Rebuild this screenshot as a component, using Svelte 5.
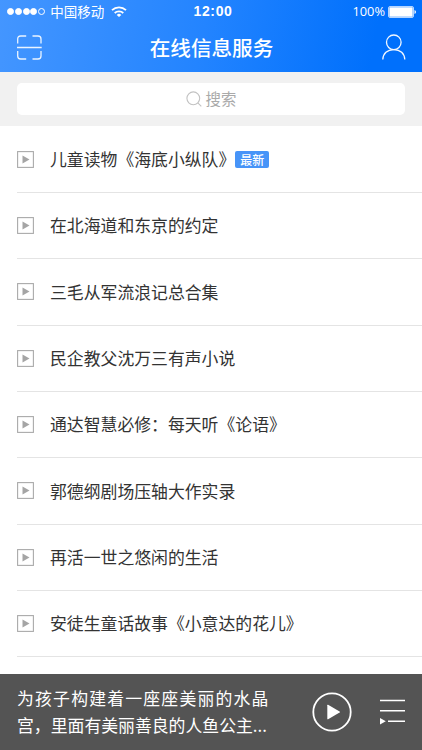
<script lang="ts">
  type Book = { id: number; title: string; fresh?: boolean };

  const books: Book[] = [
    { id: 1, title: '儿童读物《海底小纵队》', fresh: true },
    { id: 2, title: '在北海道和东京的约定' },
    { id: 3, title: '三毛从军流浪记总合集' },
    { id: 4, title: '民企教父沈万三有声小说' },
    { id: 5, title: '通达智慧必修：每天听《论语》' },
    { id: 6, title: '郭德纲剧场压轴大作实录' },
    { id: 7, title: '再活一世之悠闲的生活' },
    { id: 8, title: '安徒生童话故事《小意达的花儿》' },
  ];

  const signal = [true, true, true, true, false];
</script>

<div class="screen">
  <header>
    <div class="status">
      <div class="carrier">
        <span class="dots">
          {#each signal as on}<i class:on></i>{/each}
        </span>
        <span>中国移动</span>
        <svg class="wifi" width="16" height="12" viewBox="0 0 16 12" fill="none" stroke="#fff" stroke-width="1.8">
          <path d="M1 4.2a10.2 10.2 0 0 1 14 0" />
          <path d="M3.7 7a6.3 6.3 0 0 1 8.6 0" />
          <path d="M8 11 5.7 8.9a3.4 3.4 0 0 1 4.6 0z" fill="#fff" stroke="none" />
        </svg>
      </div>
      <time>12:00</time>
      <div class="power">
        <span>100%</span>
        <svg width="28" height="12" viewBox="0 0 28 12">
          <rect x=".5" y=".5" width="25" height="11" rx="1.5" fill="none" stroke="#b5d5ff" />
          <rect x="1.3" y="1.3" width="23.4" height="9.4" rx=".5" fill="#fff" />
          <path d="M26.5 4q1.5.5 1.5 2t-1.5 2z" fill="#fff" />
        </svg>
      </div>
    </div>
    <nav>
      <button aria-label="扫一扫">
        <svg width="26" height="26" viewBox="0 0 26 26" fill="none" stroke="#eaf4ff" stroke-width="1.3">
          <path d="M.7 9.500V5q0-3 3-3h5.500M15.500 2H21q3 0 3 3v4.500M.7 17v5q0 3 3 3h5.500M15.500 25H21q3 0 3-3v-5M0 13.500h24.700" />
        </svg>
      </button>
      <h1>在线信息服务</h1>
      <button aria-label="我的">
        <svg width="24" height="26" viewBox="0 0 24 26" fill="none" stroke="#f2f8ff" stroke-width="1.3">
          <circle cx="11.8" cy="8.3" r="7.3" />
          <path d="M.8 25.600C1 19.600 5.300 15.600 11.800 15.600s10.800 4 11 10" />
        </svg>
      </button>
    </nav>
  </header>

  <div class="search">
    <div class="field">
      <svg width="16" height="16" viewBox="0 0 16 16" fill="none" stroke="#c2c2c2" stroke-width="1.1">
        <circle cx="7.3" cy="7.3" r="6.4" />
        <path d="m11.8 11.8 3.5 3.5" />
      </svg>
      <span>搜索</span>
    </div>
  </div>

  <ul>
    {#each books as book (book.id)}
      <li>
        <svg width="17" height="17" viewBox="0 0 17 17">
          <rect x=".6" y=".6" width="15.8" height="15.8" fill="none" stroke="#aaa" stroke-width="1.1" />
          <path d="M5.500 4.500v8l7-4z" fill="#a5a5a5" />
        </svg>
        <span class="title">{book.title}</span>
        {#if book.fresh}<em>最新</em>{/if}
      </li>
    {/each}
  </ul>

  <footer>
    <div class="blurb">
      <p class="wide">为孩子构建着一座座美丽的水晶</p>
      <p>宫，里面有美丽善良的人鱼公主...</p>
    </div>
    <button class="play" aria-label="播放">
      <svg width="40" height="40" viewBox="0 0 40 40">
        <circle cx="20" cy="20" r="18.7" fill="none" stroke="#fff" stroke-width="1.8" />
        <path d="M15.300 13.200v13.600q0 .8.800.4l11.500-6.600q.8-.6 0-1.200l-11.500-6.600q-.8-.4-.8.400z" fill="#fff" />
      </svg>
    </button>
    <button aria-label="播放列表">
      <svg width="26" height="26" viewBox="0 0 26 26">
        <path d="M1 1.500h25M1 11.800h25M9 22.200h17" stroke="#fff" stroke-width="1.4" />
        <path d="M1 19v6.500l5.800-3.200z" fill="#fff" />
      </svg>
    </button>
  </footer>
</div>

<style>
  :global(body) { margin: 0; }
  .screen {
    width: 422px; height: 750px;
    display: flex; flex-direction: column;
    overflow: hidden;
    background: #fff;
    font-family: "Noto Sans CJK SC", "Liberation Sans", sans-serif;
  }
  h1, p, ul { margin: 0; padding: 0; }
  svg { display: block; flex: none; }
  button { padding: 0; border: 0; background: none; cursor: pointer; }

  header {
    height: 72px;
    flex: none;
    color: #fff;
    background: linear-gradient(100deg, #4496ff 0%, #2384ff 48%, #0070fc 88%);
  }
  .status {
    display: grid; grid-template-columns: 1fr auto 1fr;
    align-items: center;
    height: 23px;
    padding: 0 6px 0 7px;
    font-size: 13.5px; line-height: 23px;
  }
  .carrier { display: flex; align-items: center; }
  .carrier > span:nth-child(2) { margin-left: 5px; }
  .wifi { margin-left: 7px; }
  .dots { display: flex; gap: 0.8px; }
  .dots i {
    box-sizing: border-box;
    width: 7px; height: 7px;
    border: 1px solid #fff; border-radius: 50%;
  }
  .dots i.on { background: #fff; }
  time {
    padding-left: 3px;
    font: bold 14px/23px "Liberation Sans", sans-serif;
    letter-spacing: 0.6px;
  }
  .power { display: flex; align-items: center; justify-content: flex-end; gap: 3px; }
  .power span { font: 12.8px/23px "Open Sans", sans-serif; }
  nav {
    display: flex; align-items: center; justify-content: space-between;
    height: 48px;
    padding: 0 16px 0 17px;
  }
  h1 { margin-right: 2px; font-size: 20.6px; font-weight: 500; line-height: 48px; }

  .search {
    box-sizing: border-box;
    height: 54px;
    flex: none;
    padding: 11px 17px;
    background: #f1f1f1;
  }
  .field {
    display: flex; align-items: center; justify-content: center; gap: 4px;
    height: 32px;
    background: #fff;
    border-radius: 5px;
    color: #aaa;
    font-size: 15.4px; line-height: 30px;
  }
  .field span { height: 32px; }

  ul {
    flex: 1;
    min-height: 0;
    padding-top: 0.6px;
    overflow: hidden;
    list-style: none;
  }
  li {
    box-sizing: border-box;
    display: flex; align-items: center;
    height: 66.35px;
    margin-left: 17px;
    border-bottom: 1px solid #e4e4e4;
  }
  .title {
    margin-left: 16px;
    padding-bottom: 0.8px;
    color: #333;
    font-size: 16.85px; line-height: 24px;
  }
  em {
    width: 34px; height: 17px;
    border-radius: 2px;
    background: #4794f8;
    color: #fff;
    font-size: 12px; font-style: normal; font-weight: 500; line-height: 17px;
    text-align: center;
  }

  footer {
    box-sizing: border-box;
    display: flex; align-items: center;
    height: 76px;
    flex: none;
    padding: 0 17px;
    background: #545454;
    color: #fff;
  }
  .blurb {
    width: 295px;
    padding-bottom: 2px;
    font-size: 16.85px; line-height: 27px;
    white-space: nowrap;
  }
  .wide { letter-spacing: 1.2px; }
  .play { margin-right: 27px; }
</style>
